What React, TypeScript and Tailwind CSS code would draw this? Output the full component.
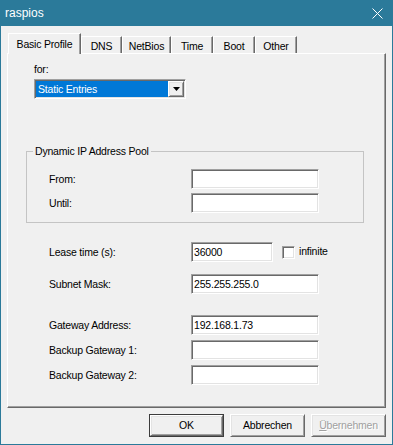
import React from "react";

const font = "font-['Liberation_Sans',Arial,sans-serif]";
const txt = "text-[10.5px] tracking-[-0.2px]";
const sunken =
  "border border-t-[#a0a0a0] border-l-[#a0a0a0] border-r-white border-b-white shadow-[inset_1px_1px_0_#696969,inset_-1px_-1px_0_#e3e3e3]";
const raised =
  "border border-t-white border-l-white border-r-[#696969] border-b-[#696969] shadow-[inset_1px_1px_0_#e3e3e3,inset_-1px_-1px_0_#a0a0a0]";

function TextBox({ value = "", width = "w-[128px]" }: { value?: string; width?: string }) {
  return (
    <input
      readOnly
      value={value}
      className={`${sunken} ${width} ${txt} h-[20px] bg-white px-[2px] text-black outline-none`}
    />
  );
}

function Row({
  label,
  value,
  className = "",
  indent = "pl-[41px]",
  children,
}: {
  label: string;
  value?: string;
  className?: string;
  indent?: string;
  children?: React.ReactNode;
}) {
  return (
    <div className={`flex items-center h-[20px] ${indent} ${className}`}>
      <span className={`w-[142px] ${txt} leading-[13px]`}>{label}</span>
      {children ?? <TextBox value={value} />}
    </div>
  );
}

type Tab = { name: string; w: string };

const tabs: Tab[] = [
  { name: "DNS", w: "w-[41px]" },
  { name: "NetBios", w: "w-[49px]" },
  { name: "Time", w: "w-[42px]" },
  { name: "Boot", w: "w-[42px]" },
  { name: "Other", w: "w-[42px]" },
];

function Button({
  label,
  isDefault,
  disabled,
}: {
  label: React.ReactNode;
  isDefault?: boolean;
  disabled?: boolean;
}) {
  if (isDefault) {
    return (
      <div className="w-[75px] h-[23px] border border-[#3c3c3c] bg-[#f0f0f0]">
        <div className={`${raised} ${txt} h-full flex items-center justify-center`}>{label}</div>
      </div>
    );
  }
  return (
    <div
      className={`${raised} ${txt} w-[75px] h-[23px] bg-[#f0f0f0] flex items-center justify-center ${
        disabled ? "text-[#a0a0a0] [text-shadow:1px_1px_0_#fff]" : ""
      }`}
    >
      {label}
    </div>
  );
}

export default function App() {
  return (
    <div className={`w-[393px] h-[445px] bg-[#2b7a9a] flex flex-col ${font} text-black`}>
      {/* title bar */}
      <div className="h-[26px] flex items-center justify-between pl-[5px] pr-[10px] text-white">
        <span className="text-[12px]">raspios</span>
        <svg width="11" height="11" viewBox="0 0 11 11">
          <path d="M0.5 0.5 L10.5 10.5 M10.5 0.5 L0.5 10.5" stroke="#fff" strokeWidth="1" />
        </svg>
      </div>

      <div className="flex-1 mx-[1px] mb-[1px] bg-[#f0f0f0] flex flex-col pt-[7px] pl-[6px] pr-[6px]">
        {/* tabs */}
        <div className={`flex items-end h-[21px] ${txt}`}>
          <div className="relative z-10 ml-[1px] w-[73px] h-[21px] bg-[#f0f0f0] border-l border-t border-white border-r border-r-[#696969] shadow-[inset_-1px_0_0_#a0a0a0] flex items-start justify-center pt-[4px] leading-[13px]">
            Basic Profile
          </div>
          {tabs.map((t) => (
            <div
              key={t.name}
              className={`${t.w} h-[18px] border-l border-t border-white border-r border-r-[#696969] shadow-[inset_-1px_0_0_#a0a0a0] flex items-start justify-center pt-[3px] leading-[13px]`}
            >
              {t.name}
            </div>
          ))}
        </div>

        {/* panel */}
        <div className="-mt-[1px] h-[355px] border border-t-white border-l-white border-r-[#696969] border-b-[#696969] shadow-[inset_-1px_-1px_0_#a0a0a0] flex flex-col">
          <div className={`ml-[26px] mt-[9px] ${txt} leading-[13px]`}>for:</div>
          <div className={`${sunken} ml-[26px] mt-[3px] w-[152px] h-[20px] bg-white flex items-stretch p-[1px]`}>
            <div className={`flex-1 bg-[#0078d7] text-white ${txt} leading-[16px] pl-[2px]`}>Static Entries</div>
            <div className={`${raised} w-[16px] bg-[#f0f0f0] flex items-center justify-center`}>
              <svg width="7" height="4" viewBox="0 0 7 4">
                <path d="M0 0 H7 L3.5 4 Z" fill="#000" />
              </svg>
            </div>
          </div>

          <fieldset className="ml-[18px] mt-[46px] w-[338px] border border-[#c4c4c4] pb-[9px]">
            <legend className={`ml-[6px] px-[2px] ${txt} leading-[13px]`}>Dynamic IP Address Pool</legend>
            <Row label="From:" indent="pl-[22px]" className="mt-[11px]" />
            <Row label="Until:" indent="pl-[22px]" className="mt-[4px]" />
          </fieldset>

          <Row label="Lease time (s):" className="mt-[19px]">
            <TextBox value="36000" width="w-[82px]" />
            <div className={`${sunken} ml-[9px] w-[13px] h-[13px] bg-white`} />
            <span className={`ml-[4px] ${txt}`}>infinite</span>
          </Row>
          <Row label="Subnet Mask:" value="255.255.255.0" className="mt-[12px]" />
          <Row label="Gateway Address:" value="192.168.1.73" className="mt-[21px]" />
          <Row label="Backup Gateway 1:" className="mt-[5px]" />
          <Row label="Backup Gateway 2:" className="mt-[5px]" />
        </div>

        {/* buttons */}
        <div className="mt-[6px] flex justify-end gap-[6px]">
          <Button label="OK" isDefault />
          <Button label="Abbrechen" />
          <Button
            disabled
            label={
              <span>
                <span className="underline">Ü</span>bernehmen
              </span>
            }
          />
        </div>
      </div>
    </div>
  );
}
